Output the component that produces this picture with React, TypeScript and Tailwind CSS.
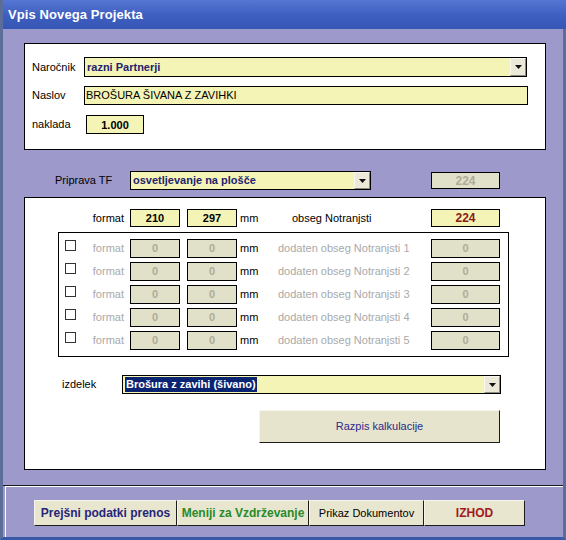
import React from 'react';

const FONT = { fontFamily: '"Liberation Sans", Arial, sans-serif' };

function DropButton() {
  return (
    <div className="w-[16px] h-full bg-[#ece9d8] border-l border-t border-l-[#f7f6ef] border-t-[#f7f6ef] border-r border-b border-r-[#8e8c80] border-b-[#8e8c80] flex items-center justify-center">
      <svg width="7" height="4" viewBox="0 0 7 4">
        <path d="M0 0 H7 L3.5 4 Z" fill="#111" />
      </svg>
    </div>
  );
}

function Combo({ width, value, bold, highlight }: { width: string; value: string; bold?: boolean; highlight?: boolean }) {
  return (
    <div className={`${width} h-[20px] bg-[#f4f4b6] border border-black flex items-stretch`}>
      <div className="flex-1 flex items-center pl-[2px] overflow-hidden">
        {highlight ? (
          <span className="bg-[#0b2472] text-white font-bold text-[11px] px-[1px] leading-[15px]">{value}</span>
        ) : (
          <span className={`text-[11px] ${bold ? 'font-bold text-[#22226e]' : 'text-black'}`}>{value}</span>
        )}
      </div>
      <DropButton />
    </div>
  );
}

function Field({ width, value, tone }: { width: string; value: string; tone: 'yellow' | 'gray' | 'red' }) {
  const bg = tone === 'gray' ? 'bg-[#e1e0c9]' : 'bg-[#f4f4b6]';
  const color = tone === 'gray' ? 'text-[#aeac96]' : tone === 'red' ? 'text-[#8c1a1a] text-[12px]' : 'text-black';
  return (
    <div className={`${width} h-[19px] ${bg} border border-black flex items-center justify-center`}>
      <span className={`font-bold text-[11px] ${color}`}>{value}</span>
    </div>
  );
}

function ExtraRow({ n }: { n: number }) {
  return (
    <div className="flex items-center h-[19px]">
      <div className="ml-[6px] w-[11px] h-[11px] border border-[#333] bg-white mb-[6px]" />
      <div className="w-[54px] text-right pr-[6px] text-[11px] text-[#a9a9a9]">format</div>
      <Field width="w-[50px]" value="0" tone="gray" />
      <div className="ml-[7px]">
        <Field width="w-[50px]" value="0" tone="gray" />
      </div>
      <div className="ml-[3px] w-[38px] text-[11px] text-black">mm</div>
      <div className="w-[153px] text-[11px] text-[#a9a9a9]">dodaten obseg Notranjsti {n}</div>
      <Field width="w-[69px]" value="0" tone="gray" />
    </div>
  );
}

function FooterButton({ width, children, className }: { width: string; children: React.ReactNode; className: string }) {
  return (
    <div className={`${width} h-[26px] bg-[#e8e6cf] border-t border-l border-t-[#f6f5ec] border-l-[#f6f5ec] border-r border-b border-r-[#1c1c1c] border-b-[#1c1c1c] flex items-center justify-center text-[11px] ${className}`}>
      {children}
    </div>
  );
}

export default function App() {
  return (
    <div className="w-[566px] h-[540px] overflow-hidden flex flex-col bg-[#9d99cb]" style={FONT}>
      {/* Title bar */}
      <div className="h-[29px] shrink-0 bg-gradient-to-b from-[#5576d2] via-[#3f60c1] to-[#3556b4] border-l-[3px] border-[#5b6d98] flex items-center pl-[5px]">
        <span className="text-white font-bold text-[13px] tracking-[0.1px]">Vpis Novega Projekta</span>
      </div>

      {/* Body */}
      <div className="flex-1 flex flex-col border-l-[3px] border-r-[3px] border-b-[3px] border-l-[#5b6d98] border-r-[#5b6d98] border-b-[#3a58a8]">
        {/* Panel 1 */}
        <div className="ml-[21px] mt-[14px] w-[522px] h-[107px] bg-white border border-black pt-[13px] flex flex-col">
          <div className="flex items-center h-[20px]">
            <div className="ml-[7px] w-[52px] text-[11px] text-black">Naročnik</div>
            <Combo width="w-[443px]" value="razni Partnerji" bold />
          </div>
          <div className="flex items-center h-[19px] mt-[9px]">
            <div className="ml-[7px] w-[52px] text-[11px] text-black">Naslov</div>
            <div className="w-[444px] h-[19px] bg-[#f4f4b6] border border-black flex items-center pl-[1px] text-[11px] text-black">
              BROŠURA ŠIVANA Z ZAVIHKI
            </div>
          </div>
          <div className="flex items-center h-[19px] mt-[10px]">
            <div className="ml-[7px] w-[54px] text-[11px] text-black">naklada</div>
            <div className="w-[58px] h-[19px] bg-[#f4f4b6] border border-black flex items-start justify-center pt-[1px]">
              <span className="font-bold text-[11px] text-black">1.000</span>
            </div>
          </div>
        </div>

        {/* Priprava TF */}
        <div className="flex items-center mt-[21px] h-[19px]">
          <div className="ml-[52px] w-[75px] text-[11px] text-black">Priprava TF</div>
          <Combo width="w-[241px] !h-[19px]" value="osvetljevanje na plošče" bold />
          <div className="ml-[60px]">
            <div className="w-[69px] h-[17px] bg-[#e1e0c9] border border-black flex items-center justify-center">
              <span className="font-bold text-[12px] text-[#aeac96]">224</span>
            </div>
          </div>
        </div>

        {/* Panel 2 */}
        <div className="ml-[21px] mt-[7px] w-[522px] h-[273px] bg-white border border-black pt-[11px] flex flex-col">
          <div className="flex items-center h-[18px]">
            <div className="w-[105px] text-right pr-[6px] text-[11px] text-black">format</div>
            <div className="w-[50px] h-[18px] bg-[#f4f4b6] border border-black flex items-center justify-center">
              <span className="font-bold text-[11px] text-black">210</span>
            </div>
            <div className="ml-[7px] w-[50px] h-[18px] bg-[#f4f4b6] border border-black flex items-center justify-center">
              <span className="font-bold text-[11px] text-black">297</span>
            </div>
            <div className="ml-[3px] w-[52px] text-[11px] text-black">mm</div>
            <div className="w-[139px] text-[11px] text-black">obseg Notranjsti</div>
            <div className="w-[69px] h-[18px] bg-[#f4f4b6] border border-black flex items-center justify-center">
              <span className="font-bold text-[12px] text-[#8c1a1a]">224</span>
            </div>
          </div>

          {/* Additional formats */}
          <div className="ml-[33px] mt-[5px] w-[451px] h-[125px] border border-black pt-[6px] flex flex-col gap-[4px]">
            {[1, 2, 3, 4, 5].map((n) => (
              <ExtraRow key={n} n={n} />
            ))}
          </div>

          <div className="flex items-center mt-[18px] h-[19px]">
            <div className="ml-[37px] w-[60px] text-[11px] text-black">izdelek</div>
            <Combo width="w-[379px] !h-[19px]" value="Brošura z zavihi (šivano)" highlight />
          </div>

          <div className="ml-[234px] mt-[16px] w-[241px] h-[33px] bg-[#e6e4cd] border-t border-l border-t-[#f6f5ec] border-l-[#f6f5ec] border-r border-b border-r-[#1c1c1c] border-b-[#1c1c1c] flex items-center justify-center">
            <span className="text-[11px] text-[#2b2b8a]">Razpis kalkulacije</span>
          </div>
        </div>

        {/* Separator */}
        <div className="mt-[15px] h-px bg-[#1a1a1a]" />
        <div className="flex-1 ml-[2px] border-l border-t border-white flex flex-col">
          <div className="ml-[28px] mt-[13px] flex">
            <FooterButton width="w-[143px]" className="font-bold text-[#25257a] text-[12px]">
              Prejšni podatki prenos
            </FooterButton>
            <FooterButton width="w-[132px]" className="font-bold text-[#2a8a2a] text-[12px]">
              Meniji za Vzdrževanje
            </FooterButton>
            <FooterButton width="w-[115px]" className="text-black">
              Prikaz Dokumentov
            </FooterButton>
            <FooterButton width="w-[101px]" className="font-bold text-[#a11a1a] text-[12px]">
              IZHOD
            </FooterButton>
          </div>
        </div>
      </div>
    </div>
  );
}
